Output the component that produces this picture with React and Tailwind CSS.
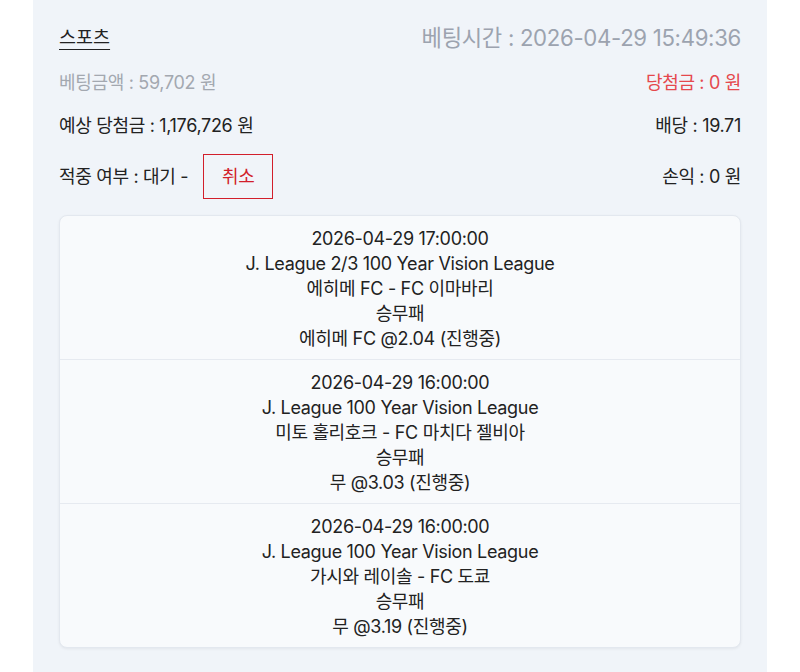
export default function App() {
  const matches = [
    {
      time: "2026-04-29 17:00:00",
      league: "J. League 2/3 100 Year Vision League",
      teams: "에히메 FC - FC 이마바리",
      market: "승무패",
      pick: "에히메 FC @2.04 (진행중)",
    },
    {
      time: "2026-04-29 16:00:00",
      league: "J. League 100 Year Vision League",
      teams: "미토 홀리호크 - FC 마치다 젤비아",
      market: "승무패",
      pick: "무 @3.03 (진행중)",
    },
    {
      time: "2026-04-29 16:00:00",
      league: "J. League 100 Year Vision League",
      teams: "가시와 레이솔 - FC 도쿄",
      market: "승무패",
      pick: "무 @3.19 (진행중)",
    },
  ];
  return (
    <div
      className="w-[800px] h-[672px] bg-white overflow-hidden"
      style={{ fontFamily: 'Inter, "Noto Sans CJK KR", sans-serif' }}
    >
      <div className="mx-[33px] h-full bg-[#f0f4f9] px-[26px] pt-[23px] text-[#222] tracking-[-0.02em]">
        <div className="flex items-center justify-between h-[30px]">
          <span className="text-[18.5px] tracking-normal underline underline-offset-[5px] decoration-1">스포츠</span>
          <span className="text-[22.2px] text-[#9ca3af]">베팅시간 : 2026-04-29 15:49:36</span>
        </div>
        <div className="mt-[16px] flex items-center justify-between h-[26px] text-[18px]">
          <span className="text-[#a3a8b0]">베팅금액 : 59,702 원</span>
          <span className="text-[#e5484d]">당첨금 : 0 원</span>
        </div>
        <div className="mt-[17px] flex items-center justify-between h-[26px] text-[18px]">
          <span>예상 당첨금 : 1,176,726 원</span>
          <span>배당 : 19.71</span>
        </div>
        <div className="mt-[16px] flex items-center justify-between h-[45px] text-[18px]">
          <div className="flex items-center">
            <span>적중 여부 : 대기 -</span>
            <button className="ml-[15px] w-[70px] h-[45px] border border-[#d21f2b] text-[#d21f2b] text-[18px] bg-transparent">
              취소
            </button>
          </div>
          <span>손익 : 0 원</span>
        </div>
        <div className="mt-[16px] rounded-lg bg-[#f8fafc] border border-[#e3e8ef] shadow-[0_1px_3px_rgba(0,0,0,0.06)] overflow-hidden">
          {matches.map((m, i) => (
            <div
              key={i}
              className={
                "text-center text-[18px] leading-[25px] pt-[10px] pb-[8px] " +
                (i > 0 ? "border-t border-[#e6eaf0]" : "")
              }
            >
              <div>{m.time}</div>
              <div>{m.league}</div>
              <div>{m.teams}</div>
              <div>{m.market}</div>
              <div>{m.pick}</div>
            </div>
          ))}
        </div>
      </div>
    </div>
  );
}
